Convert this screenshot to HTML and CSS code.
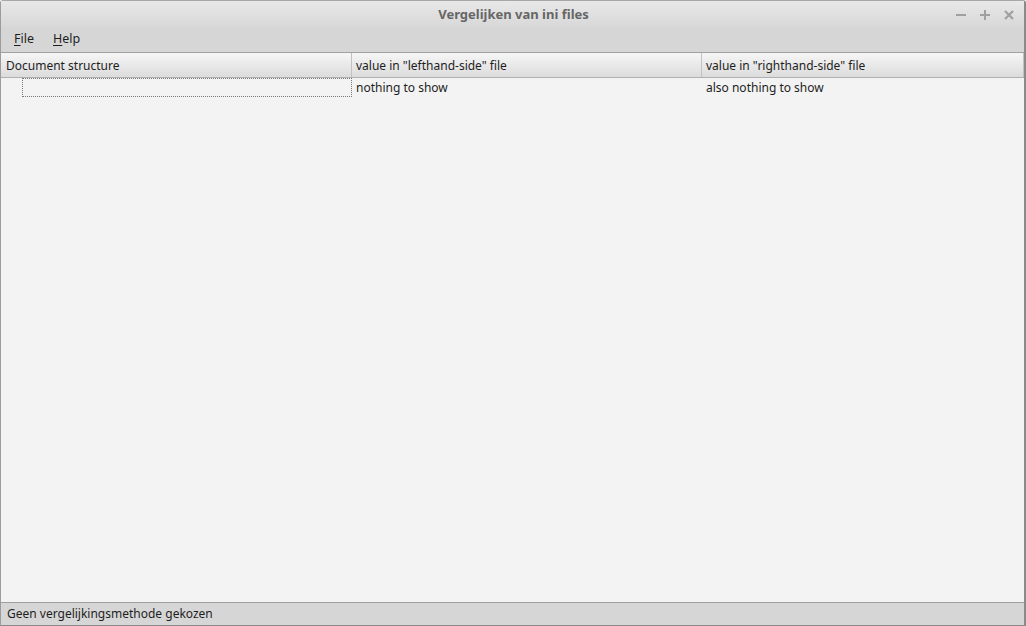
FILE: index.html
```html
<!DOCTYPE html>
<html lang="en">
    <head>
        <meta charset="UTF-8">
        <meta name="viewport" content="width=device-width, initial-scale=1.0">
        <title>Vergelijken van ini files</title>
        <link rel="stylesheet" href="styles.css">
    </head>
    <body>
        <div class="window">
            <div class="titlebar">
                <span class="title">Vergelijken van ini files</span>
                <div class="controls">
                    <svg width="10" height="10" viewBox="0 0 10 10"><rect x="0" y="4" width="10" height="2" fill="#a0a0a0"/></svg>
                    <svg width="10" height="10" viewBox="0 0 10 10"><rect x="0" y="4" width="10" height="2" fill="#a0a0a0"/><rect x="4" y="0" width="2" height="10" fill="#a0a0a0"/></svg>
                    <svg width="10" height="10" viewBox="0 0 10 10"><path d="M1 1 L9 9 M9 1 L1 9" stroke="#a0a0a0" stroke-width="2.2"/></svg>
                </div>
            </div>
            <div class="menubar">
                <span class="menuItem"><u>F</u>ile</span>
                <span class="menuItem"><u>H</u>elp</span>
            </div>
            <div class="tree">
                <div class="header">
                    <div class="col col1">Document structure</div>
                    <div class="col col2">value in "lefthand-side" file</div>
                    <div class="col col3">value in "righthand-side" file</div>
                </div>
                <div class="row">
                    <div class="cell cell1"><div class="focus"></div></div>
                    <div class="cell cell2">nothing to show</div>
                    <div class="cell cell3">also nothing to show</div>
                </div>
            </div>
            <div class="statusbar">Geen vergelijkingsmethode gekozen</div>
        </div>
    </body>
</html>
```

FILE: styles.css
```css
* {
    box-sizing: border-box;
}
body {
    margin: 0;
    font-family: "Noto Sans", "Open Sans", sans-serif;
    font-size: 12px;
    color: #1e1e1e;
}
.window {
    width: 1026px;
    height: 626px;
    display: flex;
    flex-direction: column;
    border-left: 1px solid #9c9c9c;
    border-right: 2px solid #8a8a8a;
    border-top: 1px solid #a8a8a8;
    border-bottom: 1px solid #8a8a8a;
    border-top-left-radius: 3px;
    border-top-right-radius: 3px;
    background: #d6d6d6;
}
.titlebar {
    height: 26px;
    display: flex;
    align-items: center;
    justify-content: center;
    position: relative;
    background: linear-gradient(#e8e8e8, #d8d8d8);
}
.title {
    font-weight: bold;
    font-size: 13px;
    color: #666;
    margin-left: 2px;
}
.controls {
    position: absolute;
    right: 10px;
    top: 9px;
    display: flex;
    gap: 14px;
}
.menubar {
    height: 25px;
    display: flex;
    align-items: center;
    padding-left: 13px;
    padding-bottom: 3px;
    gap: 19px;
    font-size: 12.5px;
}
.menuItem u {
    text-decoration-thickness: 1px;
    text-underline-offset: 2px;
}
.tree {
    flex: 1;
    background: #f3f3f3;
    border-top: 1px solid #a0a0a0;
}
.header {
    display: flex;
    height: 25px;
    background: linear-gradient(#f6f6f6, #dcdcdc);
    border-bottom: 1px solid #b0b0b0;
}
.col {
    display: flex;
    align-items: center;
    padding-left: 4px;
    border-right: 1px solid #c2c2c2;
}
.col1 {
    width: 351px;
    padding-left: 5px;
}
.col2 {
    width: 350px;
}
.col3 {
    flex: 1;
}
.row {
    display: flex;
    height: 19px;
}
.cell {
    display: flex;
    align-items: center;
    padding-left: 4px;
}
.cell1 {
    width: 351px;
    padding-left: 21px;
}
.cell2 {
    width: 350px;
}
.cell3 {
    flex: 1;
}
.focus {
    width: 100%;
    height: 19px;
    border: 1px dotted #777;
}
.statusbar {
    height: 23px;
    display: flex;
    align-items: center;
    padding-left: 6px;
    padding-bottom: 2px;
    border-top: 1px solid #a0a0a0;
    background: #d6d6d6;
}
```
